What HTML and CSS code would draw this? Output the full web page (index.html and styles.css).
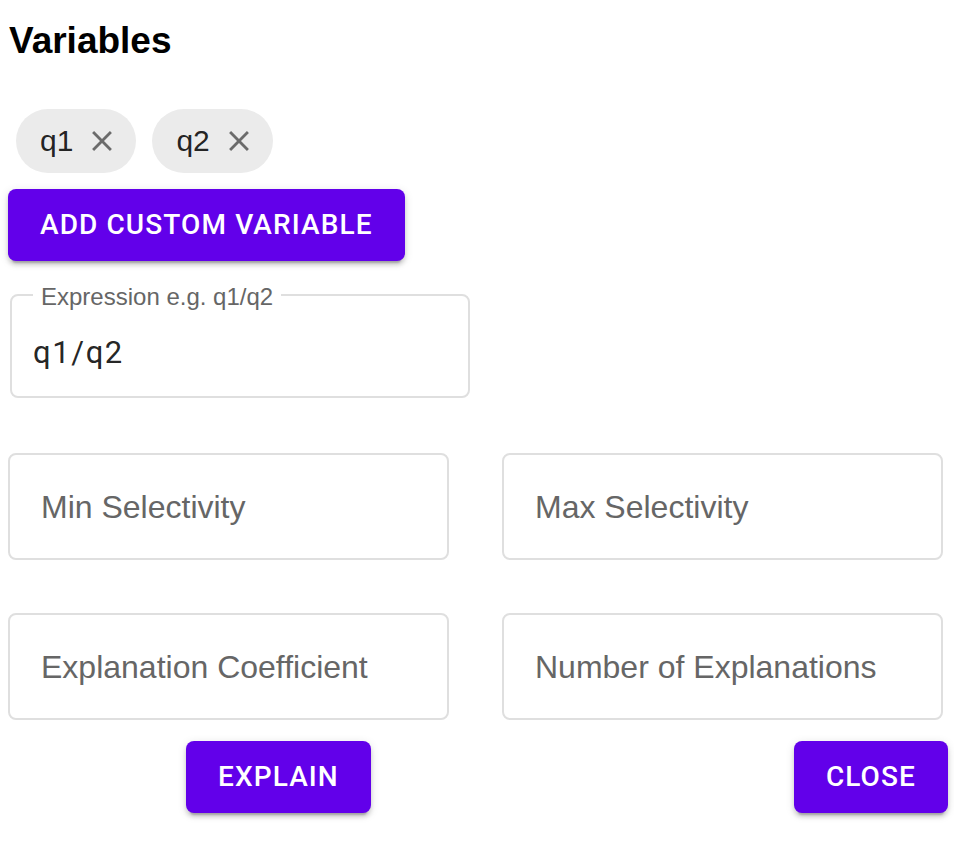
FILE: index.html
```html
<!DOCTYPE html>
<html lang="en">
<head>
<meta charset="utf-8">
<title>Variables</title>
<link rel="stylesheet" href="styles.css">
</head>
<body>
<div class="dialog">
  <h2 class="title">Variables</h2>
  <div class="chips">
    <div class="chip"><span class="chip-label">q1</span><svg class="chip-del" viewBox="0 0 24 24"><path d="M19 6.41 17.59 5 12 10.59 6.41 5 5 6.41 10.59 12 5 17.59 6.41 19 12 13.41 17.59 19 19 17.59 13.41 12z"/></svg></div>
    <div class="chip"><span class="chip-label">q2</span><svg class="chip-del" viewBox="0 0 24 24"><path d="M19 6.41 17.59 5 12 10.59 6.41 5 5 6.41 10.59 12 5 17.59 6.41 19 12 13.41 17.59 19 19 17.59 13.41 12z"/></svg></div>
  </div>
  <button class="btn btn-add">Add custom variable</button>
  <div class="expr">
    <span class="expr-label">Expression e.g. q1/q2</span>
    <span class="expr-value">q1/q2</span>
  </div>
  <div class="fields">
    <div class="field">Min Selectivity</div>
    <div class="field">Max Selectivity</div>
    <div class="field">Explanation Coefficient</div>
    <div class="field">Number of Explanations</div>
  </div>
  <div class="actions">
    <button class="btn">Explain</button>
    <button class="btn">Close</button>
  </div>
</div>
</body>
</html>
```

FILE: styles.css
```css
html, body {
  margin: 0;
  padding: 0;
  background: #fff;
}

.dialog {
  width: 954px;
  box-sizing: border-box;
  padding: 0 6px 0 8px;
  display: flex;
  flex-direction: column;
  align-items: flex-start;
  font-family: "Liberation Sans", Arial, sans-serif;
}

.title {
  margin: 23px 0 0 1px;
  font-size: 37px;
  line-height: 36px;
  font-weight: bold;
  color: #000;
}

.chips {
  margin-top: 50px;
  padding-left: 8px;
  display: flex;
  gap: 16px;
}

.chip {
  height: 64px;
  border-radius: 32px;
  background: #ebebeb;
  display: flex;
  align-items: center;
  padding: 0 17px 0 24px;
}

.chip-label {
  font-size: 30px;
  line-height: 30px;
  color: rgba(0, 0, 0, 0.87);
}

.chip-del {
  width: 34px;
  height: 34px;
  margin-left: 12px;
  fill: #6b6b6b;
}

.btn {
  font-family: Roboto, "Liberation Sans", sans-serif;
  font-weight: 500;
  font-size: 28px;
  line-height: 48px;
  letter-spacing: 1.1px;
  text-transform: uppercase;
  color: #fff;
  background: #6200ea;
  border: none;
  border-radius: 8px;
  padding: 12px 32px;
  box-shadow: 0 6px 2px -4px rgba(0, 0, 0, 0.2), 0 4px 4px 0 rgba(0, 0, 0, 0.14), 0 2px 10px 0 rgba(0, 0, 0, 0.12);
  cursor: pointer;
}

.btn-add {
  margin-top: 16px;
}

.expr {
  position: relative;
  margin: 33px 0 0 2px;
  width: 460px;
  height: 104px;
  box-sizing: border-box;
  border: 2px solid #dfdfdf;
  border-radius: 8px;
  padding: 42px 21px 0;
}

.expr-label {
  position: absolute;
  top: -13px;
  left: 21px;
  padding: 0 8px;
  background: #fff;
  font-size: 24px;
  line-height: 28px;
  color: #666;
}

.expr-value {
  display: block;
  font-family: Roboto, "Liberation Sans", sans-serif;
  font-size: 31px;
  line-height: 30px;
  letter-spacing: 1.6px;
  color: rgba(0, 0, 0, 0.87);
}

.fields {
  margin-top: 55px;
  display: grid;
  grid-template-columns: 441px 441px;
  column-gap: 53px;
  row-gap: 53px;
}

.field {
  height: 107px;
  box-sizing: border-box;
  border: 2px solid #dfdfdf;
  border-radius: 8px;
  padding-left: 31px;
  display: flex;
  align-items: center;
  font-size: 32px;
  line-height: 32px;
  color: #666;
}

.actions {
  margin-top: 21px;
  align-self: stretch;
  display: flex;
  justify-content: space-between;
  padding-left: 178px;
  padding-bottom: 30px;
}
```
